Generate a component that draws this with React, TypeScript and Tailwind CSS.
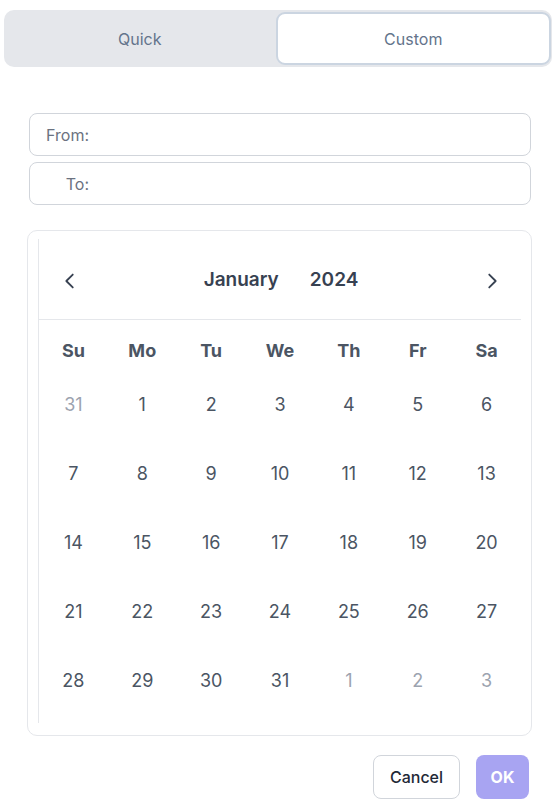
import { useState } from "react";

const weekDays = ["Su", "Mo", "Tu", "We", "Th", "Fr", "Sa"];

// January 2024 grid, muted days belong to adjacent months
const days: { n: number; muted: boolean }[] = [
  { n: 31, muted: true },
  ...Array.from({ length: 31 }, (_, i) => ({ n: i + 1, muted: false })),
  { n: 1, muted: true },
  { n: 2, muted: true },
  { n: 3, muted: true },
];

function Chevron({ dir }: { dir: "left" | "right" }) {
  return (
    <svg width="22" height="22" viewBox="0 0 24 24" fill="none" stroke="#374151" strokeWidth="2" strokeLinecap="round" strokeLinejoin="round">
      {dir === "left" ? <path d="M15 5l-7 7 7 7" /> : <path d="M9 5l7 7-7 7" />}
    </svg>
  );
}

export default function App() {
  const [tab, setTab] = useState<"quick" | "custom">("custom");

  return (
    <div className="w-[560px] h-[805px] bg-white font-['Inter',sans-serif]">
      {/* Tabs */}
      <div className="pt-[10px] pl-[4px] pr-[8px]">
        <div className="flex h-[57px] rounded-[10px] bg-[#e5e7eb] py-[2px] pr-[1px]">
          <button
            className={`flex-1 rounded-[9px] text-[16px] text-[#64748b] ${tab === "quick" ? "bg-white border-2 border-[#cbd5e1]" : ""}`}
            onClick={() => setTab("quick")}
          >
            Quick
          </button>
          <button
            className={`flex-1 rounded-[9px] text-[16px] text-[#64748b] ${tab === "custom" ? "bg-white border-2 border-[#cbd5e1]" : ""}`}
            onClick={() => setTab("custom")}
          >
            Custom
          </button>
        </div>
      </div>

      {/* Inputs */}
      <div className="mt-[46px] mx-[29px] flex flex-col gap-[6px] w-[502px]">
        <div className="flex items-center h-[43px] rounded-[8px] border border-[#d1d5db] pl-[12px]">
          <span className="w-[47px] text-right text-[16px] text-[#6b7280]">From:</span>
        </div>
        <div className="flex items-center h-[43px] rounded-[8px] border border-[#d1d5db] pl-[12px]">
          <span className="w-[47px] text-right text-[16px] text-[#6b7280]">To:</span>
        </div>
      </div>

      {/* Calendar */}
      <div className="mt-[25px] ml-[27px] w-[505px] rounded-[10px] border border-[#e5e7eb] pt-[8px] pb-[12px] px-[10px]">
        <div className="border-l border-[#e5e7eb]">
          <div className="h-[81px] flex items-center justify-between border-b border-[#e5e7eb] pt-[3px] pl-[20px] pr-[18px]">
            <button><Chevron dir="left" /></button>
            <div className="flex gap-[31px] text-[19px] font-semibold text-[#374151]">
              <span>January</span>
              <span>2024</span>
            </div>
            <button><Chevron dir="right" /></button>
          </div>
          <div className="grid grid-cols-7 pt-[10px] pb-[8px]">
            {weekDays.map((d) => (
              <div key={d} className="h-[40px] flex items-center justify-center text-[18px] font-bold text-[#4b5563]">
                {d}
              </div>
            ))}
            {days.map((d, i) => (
              <div
                key={i}
                className={`h-[69px] flex items-center justify-center text-[18px] ${d.muted ? "text-[#9ca3af]" : "text-[#4b5563]"}`}
              >
                {d.n}
              </div>
            ))}
          </div>
        </div>
      </div>

      {/* Actions */}
      <div className="mt-[19px] flex justify-end gap-[16px] pr-[31px]">
        <button className="h-[44px] w-[87px] rounded-[8px] border border-[#d1d5db] bg-white text-[16px] font-medium text-[#1f2937]">
          Cancel
        </button>
        <button className="h-[44px] w-[53px] rounded-[8px] bg-[#a8a4f2] text-[16px] font-bold text-white">
          OK
        </button>
      </div>
    </div>
  );
}
